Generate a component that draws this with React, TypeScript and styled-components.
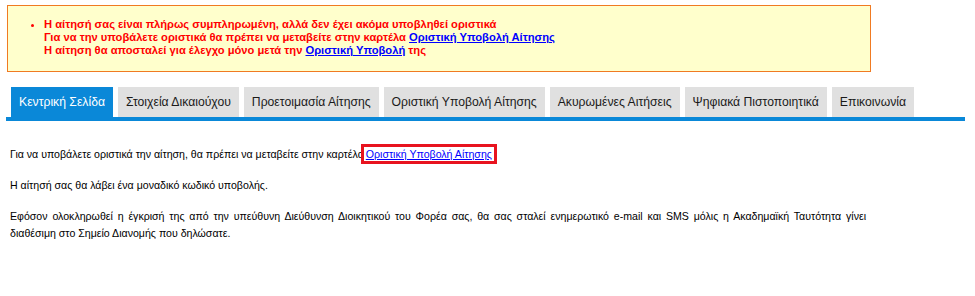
import styled, { createGlobalStyle } from 'styled-components';

const GlobalStyle = createGlobalStyle`
  body {
    margin: 0;
    background: #fff;
    font-family: 'Liberation Sans', Arial, sans-serif;
  }
`;

const tabs = [
  'Κεντρική Σελίδα',
  'Στοιχεία Δικαιούχου',
  'Προετοιμασία Αίτησης',
  'Οριστική Υποβολή Αίτησης',
  'Ακυρωμένες Αιτήσεις',
  'Ψηφιακά Πιστοποιητικά',
  'Επικοινωνία',
];

function App() {
  return (
    <Page>
      <GlobalStyle />
      <Notice>
        <NoticeList>
          <li>
            Η αίτησή σας είναι πλήρως συμπληρωμένη, αλλά δεν έχει ακόμα υποβληθεί οριστικά
            <br />
            Για να την υποβάλετε οριστικά θα πρέπει να μεταβείτε στην καρτέλα{' '}
            <NoticeLink href="#">Οριστική Υποβολή Αίτησης</NoticeLink>
            <br />
            Η αίτηση θα αποσταλεί για έλεγχο μόνο μετά την{' '}
            <NoticeLink href="#">Οριστική Υποβολή</NoticeLink> της
          </li>
        </NoticeList>
      </Notice>

      <TabBar>
        {tabs.map((t, i) => (
          <Tab key={t} active={i === 0}>
            {t}
          </Tab>
        ))}
      </TabBar>

      <Content>
        <Para>
          Για να υποβάλετε οριστικά την αίτηση, θα πρέπει να μεταβείτε στην καρτέλα
          <Boxed href="#">Οριστική Υποβολή Αίτησης</Boxed>.
        </Para>
        <Para>Η αίτησή σας θα λάβει ένα μοναδικό κωδικό υποβολής.</Para>
        <Para>
          Εφόσον ολοκληρωθεί η έγκρισή της από την υπεύθυνη Διεύθυνση Διοικητικού του Φορέα σας, θα
          σας σταλεί ενημερωτικό e-mail και SMS μόλις η Ακαδημαϊκή Ταυτότητα γίνει διαθέσιμη στο
          Σημείο Διανομής που δηλώσατε.
        </Para>
      </Content>
    </Page>
  );
}

export default App;

const Page = styled.div`
  padding: 5px 10px 0 6px;
  width: 975px;
  box-sizing: border-box;
`;

const Notice = styled.div`
  margin-left: 1px;
  width: 864px;
  height: 67px;
  box-sizing: border-box;
  background: #ffffcc;
  border: 1px solid #f07a22;
  padding: 12px 0 0 0;
`;

const NoticeList = styled.ul`
  margin: 0;
  padding-left: 36px;
  color: #ff0000;
  font-weight: bold;
  font-size: 11.2px;
  line-height: 13px;
`;

const NoticeLink = styled.a`
  color: #0000ff;
  text-decoration: underline;
`;

const TabBar = styled.div`
  display: flex;
  gap: 5px;
  margin-top: 15px;
  padding-left: 5px;
  border-bottom: 4px solid #0a88d8;
`;

const Tab = styled.div<{ active?: boolean }>`
  height: 30px;
  display: flex;
  align-items: center;
  padding: 0 8px;
  white-space: nowrap;
  font-size: 12.2px;
  color: ${(p) => (p.active ? '#ffffff' : '#1a1a1a')};
  background: ${(p) => (p.active ? '#0a88d8' : '#e0e0e0')};
`;

const Content = styled.div`
  width: 856px;
  padding: 25px 0 0 4px;
  font-size: 10.6px;
  color: #000;
  text-align: justify;
`;

const Para = styled.p`
  margin: 0 0 14px 0;
  line-height: 17px;
`;

const Boxed = styled.a`
  color: #0000ff;
  text-decoration: underline;
  outline: 3px solid #e8131f;
  padding: 1px 2px;
`;
